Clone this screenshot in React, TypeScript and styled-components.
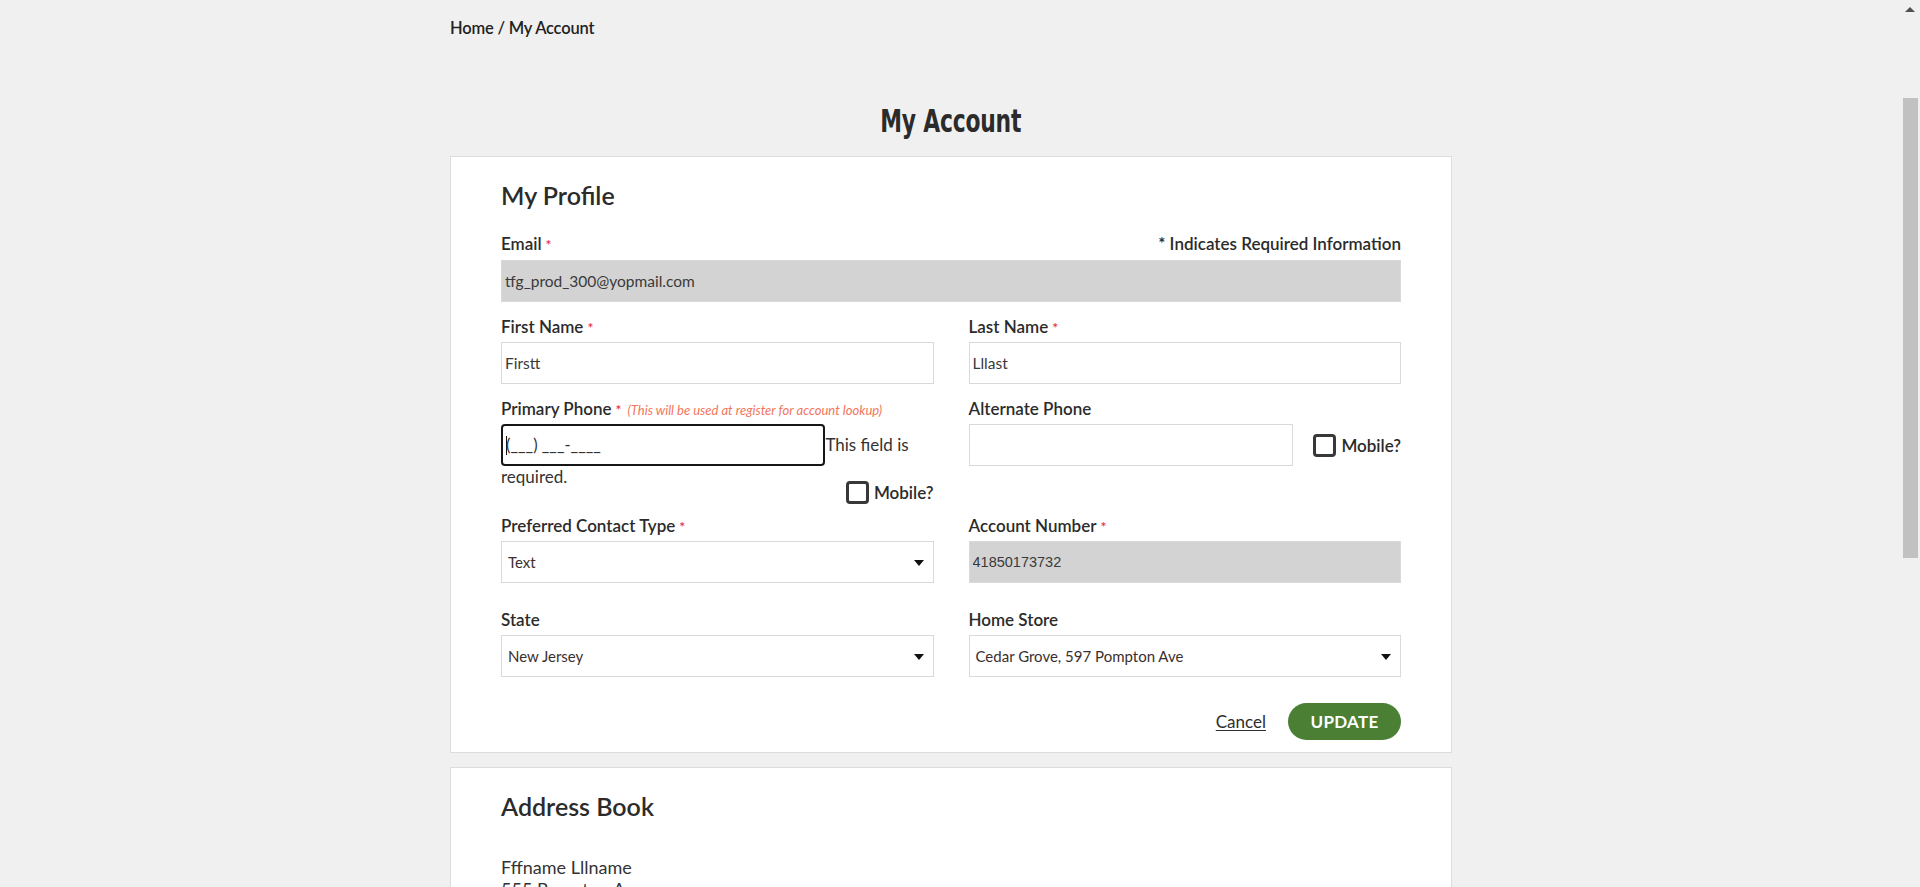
import React from "react";
import styled, { createGlobalStyle } from "styled-components";

const GlobalStyle = createGlobalStyle`
  html, body { margin: 0; padding: 0; }
  body {
    background: #f0f0f0;
    font-family: Lato, "Noto Sans", sans-serif;
    color: #2e2e2e;
  }
  *, *::before, *::after { box-sizing: border-box; }
`;

const Frame = styled.div`
  display: flex;
  align-items: flex-start;
  min-height: 1891px;
`;

const Main = styled.main`
  flex: 1;
  min-width: 0;
`;

const Rail = styled.div`
  position: sticky;
  top: 0;
  flex-shrink: 0;
  width: 18px;
  height: 100vh;
  background: #f0f0f0;
  display: flex;
  flex-direction: column;
  align-items: flex-start;
`;

const RailArrow = styled.svg`
  margin: 7px 0 0 3px;
  display: block;
`;

const Thumb = styled.div`
  margin: 86px 0 0 1px;
  width: 15px;
  height: 460px;
  background: #c1c1c1;
`;

const Page = styled.div`
  width: 1002px;
  margin: 0 auto;
  padding: 16px 0 40px;
`;

const Breadcrumb = styled.nav`
  font-size: 16.5px;
  font-weight: 600;
  line-height: 24px;
  letter-spacing: -0.2px;
  color: #222;
`;

const Crumb = styled.a`
  color: inherit;
  text-decoration: none;
`;

const Title = styled.h1`
  margin: 61px 0 15px;
  text-align: center;
  font-family: "Liberation Sans Narrow", "DejaVu Sans Condensed", "Arial Narrow", sans-serif;
  font-stretch: condensed;
  font-weight: 700;
  font-size: 32px;
  line-height: 40px;
  color: #2b2b2b;
`;

const TitleText = styled.span`
  display: inline-block;
  transform: scaleX(0.76);
  letter-spacing: -0.3px;
`;

const Card = styled.section<{ $top?: number }>`
  background: #fff;
  border: 1px solid #dcdcdc;
  padding: 23px 50px 12px;
  margin-top: ${(p) => p.$top ?? 0}px;
`;

const CardTitle = styled.h2<{ $gap: number }>`
  margin: 0 0 ${(p) => p.$gap}px;
  font-size: 25px;
  font-weight: 600;
  line-height: 31px;
  color: #2b2b2b;
`;

const HeaderRow = styled.div`
  display: flex;
  justify-content: space-between;
  align-items: flex-start;
  margin-bottom: 4px;
`;

const Label = styled.label<{ $flush?: boolean }>`
  display: block;
  font-size: 17px;
  font-weight: 600;
  line-height: 24px;
  color: #2b2b2b;
  margin-bottom: ${(p) => (p.$flush ? 0 : 3)}px;
`;

const Req = styled.span`
  color: #e2334a;
  font-size: 14px;
  line-height: 1;
  margin-left: 4px;
`;

const Hint = styled.em`
  color: #f2765c;
  font-size: 13px;
  line-height: 1;
  font-weight: 400;
  margin-left: 6px;
`;

const Note = styled.span`
  font-size: 17px;
  font-weight: 600;
  line-height: 24px;
  color: #2b2b2b;
`;

const TextInput = styled.input<{ $disabled?: boolean; $mono?: boolean; $w?: string }>`
  display: block;
  width: ${(p) => p.$w ?? "100%"};
  height: 42px;
  padding: 0 3px;
  border: 1px solid #d9d9d9;
  border-radius: 0;
  background: ${(p) => (p.$disabled ? "#d3d3d3" : "#fff")};
  font-family: ${(p) => (p.$mono ? '"Liberation Sans", Arial, sans-serif' : 'Lato, "Noto Sans", sans-serif')};
  font-size: ${(p) => (p.$mono ? "14.5px" : "15.5px")};
  color: #3a3a3a;
  outline: none;
`;

const FieldRow = styled.div<{ $top: number }>`
  display: grid;
  grid-template-columns: 1fr 1fr;
  column-gap: 35px;
  margin-top: ${(p) => p.$top}px;
`;

const Field = styled.div`
  min-width: 0;
`;

const PhoneWrap = styled.div`
  font-size: 17px;
  line-height: 22px;
  color: #333;
`;

const MaskInput = styled.div`
  display: inline-block;
  width: 75%;
  height: 42px;
  border: 2px solid #161616;
  border-radius: 4px;
  padding: 0 3px;
  font-size: 16.5px;
  line-height: 38px;
  color: #333;
  vertical-align: baseline;
  white-space: nowrap;
`;

const Caret = styled.span`
  display: inline-block;
  width: 1px;
  height: 19px;
  background: #111;
  vertical-align: -4px;
  margin-right: -1px;
`;

const MobileRow = styled.div<{ $pull?: number }>`
  display: flex;
  justify-content: flex-end;
  align-items: center;
  gap: 5px;
  height: 24px;
  margin-top: ${(p) => p.$pull ?? 0}px;
  flex-shrink: 0;
`;

const Box = styled.span`
  width: 23px;
  height: 23px;
  border: 3px solid #383838;
  border-radius: 4px;
  background: #fff;
`;

const MobileText = styled.span`
  font-size: 17px;
  font-weight: 600;
  color: #2b2b2b;
`;

const PhoneLine = styled.div`
  display: flex;
  align-items: center;
  justify-content: space-between;
`;

const SelectWrap = styled.div`
  position: relative;
`;

const Select = styled.select`
  display: block;
  width: 100%;
  height: 42px;
  padding: 0 28px 0 6px;
  border: 1px solid #d9d9d9;
  border-radius: 0;
  background: #fff;
  appearance: none;
  font-family: Lato, "Noto Sans", sans-serif;
  font-size: 15px;
  color: #3b2f2f;
  outline: none;
`;

const Arrow = styled.svg`
  position: absolute;
  right: 10px;
  top: 19px;
  pointer-events: none;
`;

const Actions = styled.div`
  display: flex;
  justify-content: flex-end;
  align-items: center;
  gap: 22px;
  margin-top: 26px;
`;

const CancelLink = styled.a`
  font-size: 17px;
  color: #2e2e2e;
  text-decoration: underline;
  text-underline-offset: 2px;
  cursor: pointer;
`;

const UpdateButton = styled.button`
  width: 113px;
  height: 37px;
  border: none;
  border-radius: 19px;
  background: #4a7f34;
  color: #fff;
  font-family: Lato, "Noto Sans", sans-serif;
  font-size: 17px;
  font-weight: 700;
  letter-spacing: 0.3px;
  cursor: pointer;
`;

const AddressText = styled.div`
  font-size: 18px;
  line-height: 22px;
  font-weight: 400;
  color: #333;
`;

const AddressActions = styled.div`
  display: flex;
  gap: 20px;
  margin-top: 14px;
  font-size: 17px;
`;

const AddButton = styled(UpdateButton)`
  width: auto;
  padding: 0 26px;
  margin: 30px 0 20px;
`;

function SelectField({ value, options }: { value: string; options: string[] }) {
  return (
    <SelectWrap>
      <Select defaultValue={value}>
        {options.map((o) => (
          <option key={o}>{o}</option>
        ))}
      </Select>
      <Arrow width="10" height="6" viewBox="0 0 10 6">
        <polygon points="0,0 10,0 5,6" fill="#111" />
      </Arrow>
    </SelectWrap>
  );
}

function Mobile({ pull }: { pull?: number }) {
  return (
    <MobileRow $pull={pull}>
      <Box />
      <MobileText>Mobile?</MobileText>
    </MobileRow>
  );
}

export default function App() {
  return (
    <>
      <GlobalStyle />
      <Frame>
        <Main>
          <Page>
            <Breadcrumb>
              <Crumb href="#">Home</Crumb> / <Crumb href="#">My Account</Crumb>
            </Breadcrumb>
            <Title>
              <TitleText>My Account</TitleText>
            </Title>

            <Card>
              <CardTitle $gap={21}>My Profile</CardTitle>
              <HeaderRow>
                <Label $flush>
                  Email<Req>*</Req>
                </Label>
                <Note>* Indicates Required Information</Note>
              </HeaderRow>
              <TextInput $disabled readOnly value="tfg_prod_300@yopmail.com" />

              <FieldRow $top={13}>
                <Field>
                  <Label>
                    First Name<Req>*</Req>
                  </Label>
                  <TextInput defaultValue="Firstt" />
                </Field>
                <Field>
                  <Label>
                    Last Name<Req>*</Req>
                  </Label>
                  <TextInput defaultValue="Lllast" />
                </Field>
              </FieldRow>

              <FieldRow $top={13}>
                <Field>
                  <Label>
                    Primary Phone<Req>*</Req>
                    <Hint>(This will be used at register for account lookup)</Hint>
                  </Label>
                  <PhoneWrap>
                    <MaskInput>
                      <Caret />
                      (___) ___-____
                    </MaskInput>
                    This field is required.
                  </PhoneWrap>
                  <Mobile pull={-8} />
                </Field>
                <Field>
                  <Label>Alternate Phone</Label>
                  <PhoneLine>
                    <TextInput $w="75%" />
                    <Mobile />
                  </PhoneLine>
                </Field>
              </FieldRow>

              <FieldRow $top={10}>
                <Field>
                  <Label>
                    Preferred Contact Type<Req>*</Req>
                  </Label>
                  <SelectField value="Text" options={["Text", "Email", "Phone"]} />
                </Field>
                <Field>
                  <Label>
                    Account Number<Req>*</Req>
                  </Label>
                  <TextInput $disabled $mono readOnly value="41850173732" />
                </Field>
              </FieldRow>

              <FieldRow $top={25}>
                <Field>
                  <Label>State</Label>
                  <SelectField value="New Jersey" options={["New Jersey", "New York", "Pennsylvania"]} />
                </Field>
                <Field>
                  <Label>Home Store</Label>
                  <SelectField
                    value="Cedar Grove, 597 Pompton Ave"
                    options={["Cedar Grove, 597 Pompton Ave", "Montclair, 12 Bloomfield Ave"]}
                  />
                </Field>
              </FieldRow>

              <Actions>
                <CancelLink>Cancel</CancelLink>
                <UpdateButton>UPDATE</UpdateButton>
              </Actions>
            </Card>

            <Card $top={14}>
              <CardTitle $gap={34}>Address Book</CardTitle>
              <AddressText>
                Fffname Lllname
                <br />
                555 Pompton Ave
                <br />
                Cedar Grove, NJ 07009
                <br />
                (973) 555-0100
              </AddressText>
              <AddressActions>
                <CancelLink>Edit</CancelLink>
                <CancelLink>Delete</CancelLink>
              </AddressActions>
              <AddButton>ADD NEW ADDRESS</AddButton>
            </Card>
          </Page>
        </Main>
        <Rail aria-hidden>
          <RailArrow width="10" height="5" viewBox="0 0 10 5">
            <polygon points="0,5 10,5 5,0" fill="#505050" />
          </RailArrow>
          <Thumb />
        </Rail>
      </Frame>
    </>
  );
}
